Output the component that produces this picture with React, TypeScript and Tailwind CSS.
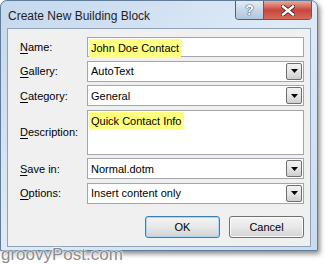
import type { ReactNode } from "react";

const font = { fontFamily: '"Liberation Sans", Arial, sans-serif' };

function Label({ k, rest }: { k: string; rest: string }) {
  return (
    <span>
      <span className="underline underline-offset-[2px]">{k}</span>
      {rest}
    </span>
  );
}

function TextBox({ children, tall }: { children?: ReactNode; tall?: boolean }) {
  return (
    <div
      className={
        "flex-1 border border-[#a3a5aa] bg-white pl-[1px] pt-[1px] text-[11px] leading-[16px] text-black " +
        (tall ? "h-[45px]" : "h-[20px]")
      }
    >
      {children}
    </div>
  );
}

function Combo({ value }: { value: string }) {
  return (
    <div className="flex h-[21px] flex-1 items-center border border-[#a3a5aa] bg-white pl-[3px] pr-[1px] text-[11px] leading-[16px] text-black">
      <span className="flex-1">{value}</span>
      <div className="flex h-[17px] w-[16px] items-center justify-center rounded-[2px] border border-[#707070] bg-gradient-to-b from-[#f2f2f2] via-[#e6e6e6] to-[#cfcfcf]">
        <svg width="7" height="4" viewBox="0 0 7 4">
          <path d="M0 0h7L3.5 4z" fill="#000" />
        </svg>
      </div>
    </div>
  );
}

function Row({ label, children }: { label: ReactNode; children: ReactNode }) {
  return (
    <div className="flex items-center">
      <div className="w-[73px] pl-[6px] text-[11px] leading-[16px] text-black">{label}</div>
      {children}
    </div>
  );
}

function Button({ children, primary }: { children: ReactNode; primary?: boolean }) {
  return (
    <div
      className={
        "flex h-[22px] w-[75px] items-center justify-center rounded-[3px] border bg-gradient-to-b from-[#f4f4f4] via-[#e8e8e8] to-[#d2d2d2] text-[11px] leading-[16px] text-black " +
        (primary
          ? "border-[#3c7fb1] shadow-[inset_0_0_0_1px_#a8d8f4]"
          : "border-[#707070] shadow-[inset_0_0_0_1px_#fbfbfb]")
      }
    >
      {children}
    </div>
  );
}

export default function App() {
  return (
    <div className="relative h-[264px] w-[329px] overflow-hidden bg-white" style={font}>
      <div className="flex h-[251px] w-[318px] flex-col rounded-t-[7px] border border-[#5f7c99] bg-gradient-to-br from-[#c4d8ee] via-[#dfeaf6] to-[#c9dcef] px-[6px] pb-[3px] shadow-[2px_3px_5px_rgba(0,0,0,0.45)]">
        <div className="flex h-[27px] items-start">
          <span className="mt-[7px] pl-[1px] text-[12px] leading-[16px] text-[#1e1e1e]">
            Create New Building Block
          </span>
          <div className="ml-auto mr-[-1px] flex h-[19px] overflow-hidden rounded-b-[4px] border border-t-0 border-[#4a6179]">
            <div className="flex w-[28px] items-center justify-center border-r border-[#4a6179] bg-gradient-to-b from-[#e3ecf6] via-[#c7d7e9] to-[#b0c6dd]">
              <span
                className="text-[14px] font-bold leading-none text-white"
                style={{ textShadow: "0 0 1px #3a4d63, 0 0 1px #3a4d63, 0 0 1px #3a4d63" }}
              >
                ?
              </span>
            </div>
            <div className="flex w-[47px] items-center justify-center bg-gradient-to-b from-[#e9a99e] via-[#c7463a] to-[#d56a5c]">
              <svg width="14" height="11" viewBox="0 0 14 11">
                <path
                  d="M2 1.5L12 9.5M12 1.5L2 9.5"
                  stroke="#4a2a26"
                  strokeWidth="4.2"
                  strokeLinecap="square"
                />
                <path d="M2 1.5L12 9.5M12 1.5L2 9.5" stroke="#fff" strokeWidth="2.4" strokeLinecap="square" />
              </svg>
            </div>
          </div>
        </div>
        <div className="flex flex-1 flex-col border border-[#8ea2b8] bg-[#f0f0f0] px-[6px] pt-[8px]">
          <div className="flex flex-col gap-[3.5px]">
            <Row label={<Label k="N" rest="ame:" />}>
              <TextBox>
                <span className="inline-block bg-[#ffff80] px-[2px] py-[1px]">John Doe Contact</span>
              </TextBox>
            </Row>
            <Row label={<Label k="G" rest="allery:" />}>
              <Combo value="AutoText" />
            </Row>
            <Row label={<Label k="C" rest="ategory:" />}>
              <Combo value="General" />
            </Row>
            <Row label={<Label k="D" rest="escription:" />}>
              <TextBox tall>
                <span className="inline-block bg-[#ffff80] px-[2px] py-[1px]">Quick Contact Info</span>
              </TextBox>
            </Row>
            <Row label={<Label k="S" rest="ave in:" />}>
              <Combo value="Normal.dotm" />
            </Row>
            <Row label={<Label k="O" rest="ptions:" />}>
              <Combo value="Insert content only" />
            </Row>
          </div>
          <div className="mt-[12px] flex justify-end gap-[9px]">
            <Button primary>OK</Button>
            <Button>Cancel</Button>
          </div>
        </div>
      </div>
      <div
        className="absolute bottom-[1px] left-[1px] text-[17px] leading-none text-[#8c8c8c]"
        style={{ textShadow: "0 0 2px #fff, 0 0 2px #fff, 0 0 2px #fff" }}
      >
        groovyPost.com
      </div>
    </div>
  );
}
